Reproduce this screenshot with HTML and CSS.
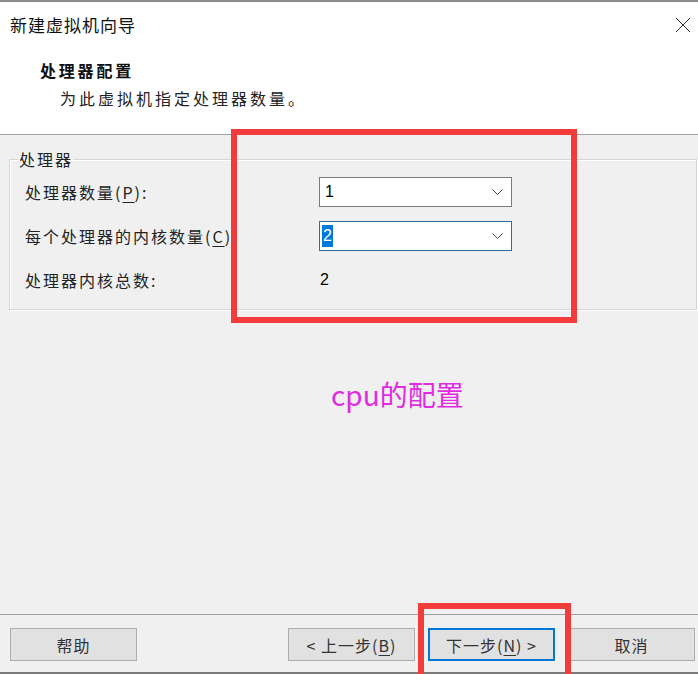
FILE: index.html
```html
<!DOCTYPE html>
<html lang="zh-CN">
<head>
<meta charset="utf-8">
<title>新建虚拟机向导</title>
<link rel="stylesheet" href="styles.css">
</head>
<body>
<div class="page">
  <div class="topline"></div>
  <header class="header">
    <div class="titlebar">
      <span class="title">新建虚拟机向导</span>
      <svg class="close" width="16" height="16" viewBox="0 0 16 16"><path d="M1 1 L15 15 M15 1 L1 15" stroke="#333" stroke-width="1" fill="none"/></svg>
    </div>
    <div class="heading">处理器配置</div>
    <div class="sub">为此虚拟机指定处理器数量。</div>
  </header>
  <main class="main">
    <fieldset class="group">
      <legend class="legend">处理器</legend>
      <div class="grid">
        <div class="label">处理器数量(<u>P</u>):</div>
        <div class="combo"><span class="val">1</span><svg class="chev" width="11" height="7" viewBox="0 0 11 7"><polyline points="0.5,0.5 5.5,5.5 10.5,0.5" stroke="#444" stroke-width="1" fill="none"/></svg></div>
        <div class="label">每个处理器的内核数量(<u>C</u>)</div>
        <div class="combo focus"><span class="val sel">2</span><svg class="chev" width="11" height="7" viewBox="0 0 11 7"><polyline points="0.5,0.5 5.5,5.5 10.5,0.5" stroke="#444" stroke-width="1" fill="none"/></svg></div>
        <div class="label">处理器内核总数:</div>
        <div class="total">2</div>
      </div>
    </fieldset>
    <div class="note">cpu的配置</div>
  </main>
  <footer class="footer">
    <button class="btn">帮助</button>
    <div class="spacer"></div>
    <button class="btn">&lt; 上一步(<u>B</u>)</button>
    <button class="btn default">下一步(<u>N</u>) &gt;</button>
    <button class="btn">取消</button>
  </footer>
  <div class="mark mark-main"></div>
  <div class="mark mark-next"></div>
</div>
</body>
</html>
```
FILE: styles.css
```css
html, body {
  margin: 0;
  padding: 0;
}
body {
  background: #f0f0f0;
  font-family: "Noto Sans CJK SC", "Microsoft YaHei", sans-serif;
  color: #1a1a1a;
}
.page {
  position: relative;
  width: 698px;
  height: 674px;
  overflow: hidden;
  display: flex;
  flex-direction: column;
}
.topline {
  height: 2px;
  background: #8c8c8c;
  flex: none;
}
.header {
  flex: none;
  height: 132px;
  background: #fff;
  border-bottom: 1px solid #a0a0a0;
}
.titlebar {
  height: 44px;
  display: flex;
  align-items: center;
  justify-content: space-between;
  padding: 0 7px 0 10px;
}
.title {
  font-size: 17px;
  letter-spacing: 1px;
  color: #111;
}
.close {
  margin-top: 1px;
}
.heading {
  margin-top: 12px;
  padding-left: 40px;
  height: 24px;
  line-height: 24px;
  font-size: 16px;
  font-weight: bold;
  letter-spacing: 2.8px;
  color: #111;
}
.sub {
  margin-top: 4px;
  padding-left: 60px;
  height: 24px;
  line-height: 24px;
  font-size: 16px;
  letter-spacing: 3px;
  color: #222;
}
.main {
  flex: 1;
  display: flex;
  flex-direction: column;
}
.group {
  margin: 14px 1px 0 9px;
  padding: 1px 15px 7px 15px;
  border: 1px solid #d6d6d6;
  box-shadow: inset 1px 1px 0 #fff, 1px 1px 0 #fff;
}
.legend {
  margin-left: -7px;
  padding: 0 1px;
  line-height: 20px;
  font-size: 16px;
  letter-spacing: 2px;
  color: #222;
}
.grid {
  display: grid;
  grid-template-columns: 294px 193px;
  grid-auto-rows: 44px;
  align-items: center;
}
.label {
  font-size: 16px;
  letter-spacing: 2px;
  color: #222;
}
.label u {
  text-underline-offset: 3px;
}
.combo {
  box-sizing: border-box;
  height: 30px;
  background: #fff;
  border: 1px solid #7a7a7a;
  display: flex;
  align-items: center;
  justify-content: space-between;
  padding: 0 8px 0 5px;
}
.combo.focus {
  border-color: #2a6e9f;
  padding-left: 2px;
}
.val {
  font-family: "Liberation Sans", Arial, sans-serif;
  font-size: 16px;
  color: #000;
  line-height: 22px;
}
.val.sel {
  background: #0078d7;
  color: #fff;
  padding: 0 1px;
}
.chev {
  margin-top: 1px;
}
.total {
  font-family: "Liberation Sans", Arial, sans-serif;
  font-size: 16px;
  color: #000;
  padding-left: 1px;
}
.note {
  margin-top: 66px;
  padding-left: 331px;
  line-height: 36px;
  font-size: 28px;
  color: #e02be0;
}
.footer {
  flex: none;
  height: 44px;
  border-top: 1px solid #a0a0a0;
  border-bottom: 2px solid #7a7a7a;
  padding: 13px 3px 0 10px;
  display: flex;
  align-items: flex-start;
  gap: 13px;
}
.spacer {
  flex: 1;
}
.btn {
  box-sizing: border-box;
  width: 127px;
  height: 33px;
  background: #e1e1e1;
  border: 1px solid #adadad;
  font-family: "Noto Sans CJK SC", "Microsoft YaHei", sans-serif;
  font-size: 16px;
  letter-spacing: 1px;
  color: #333;
  padding: 0;
}
.btn u {
  text-underline-offset: 3px;
}
.btn.default {
  border: 2px solid #0078d7;
}
.mark {
  position: absolute;
  border: 6px solid #f23c3c;
  box-sizing: border-box;
}
.mark-main {
  left: 231px;
  top: 129px;
  width: 346px;
  height: 194px;
}
.mark-next {
  left: 418px;
  top: 603px;
  width: 153px;
  height: 80px;
}
```
